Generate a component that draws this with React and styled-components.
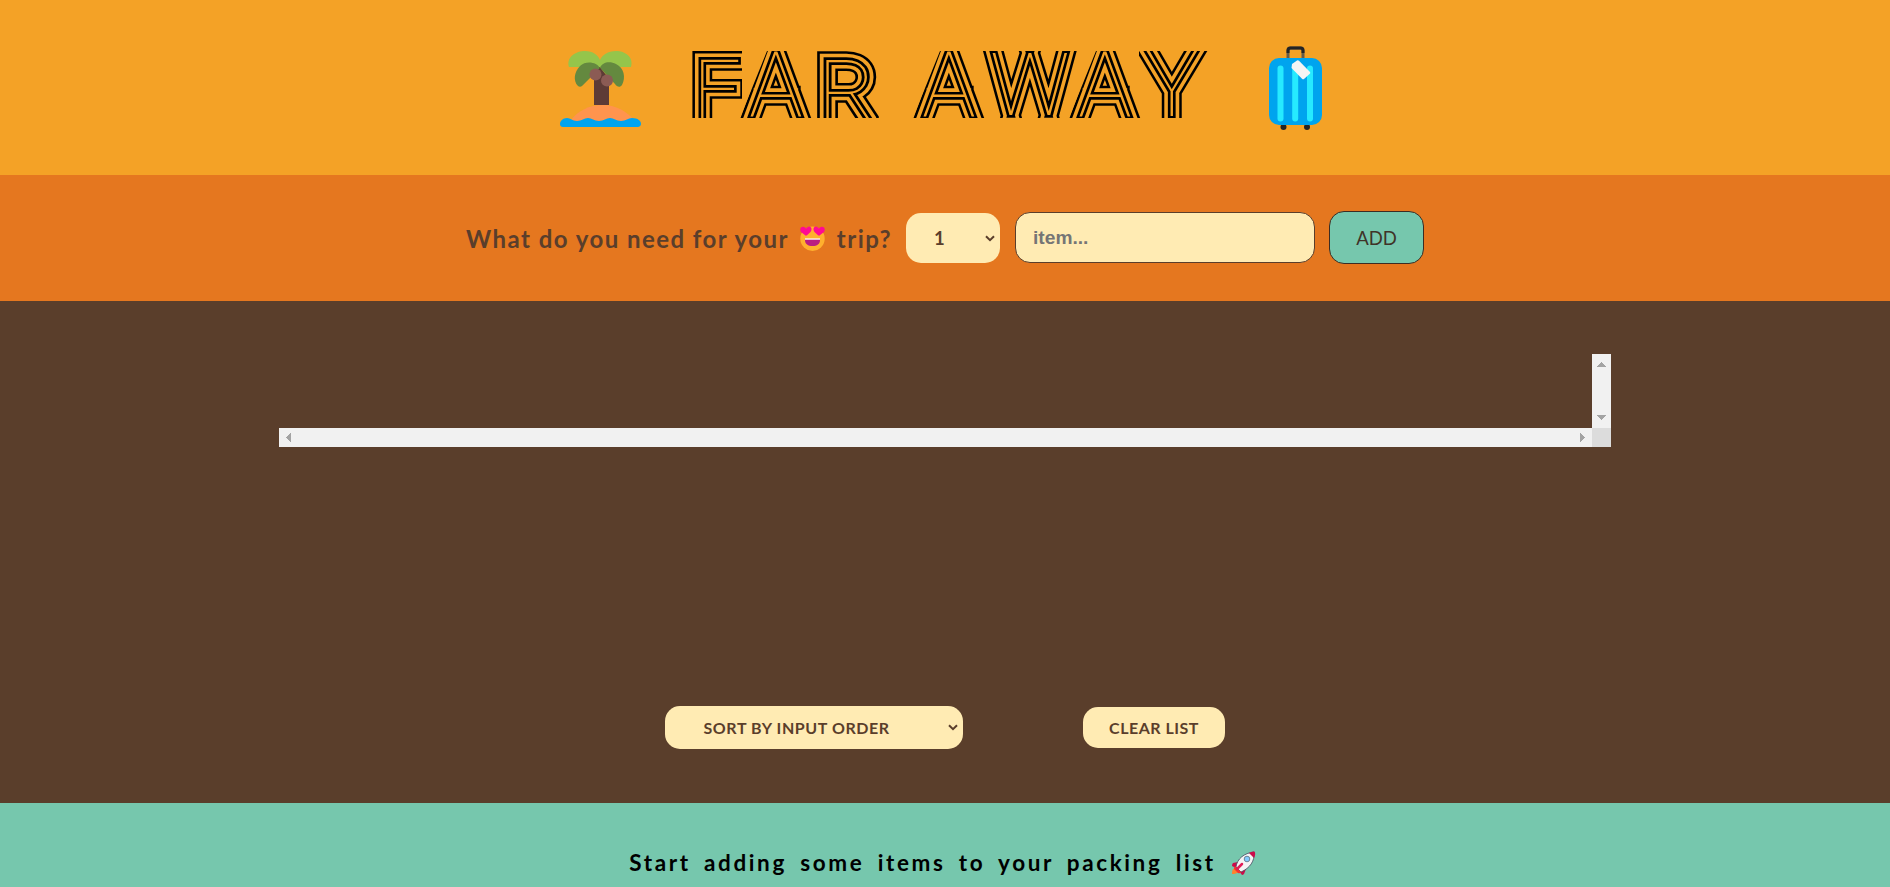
import React from "react";
import styled, { createGlobalStyle, css } from "styled-components";

const Global = createGlobalStyle`
  * { box-sizing: border-box; margin: 0; padding: 0; }
  body { background: #5a3e2b; overflow: hidden; }
`;

const cream = "#ffebb3";
const brown = "#5a3e2b";
const amber = "#f4a226";
const rounded = `Lato, "Open Sans", sans-serif`;

const Page = styled.div`
  height: 887px;
  display: grid;
  grid-template-rows: 175px 126px 502px 84px;
  font-family: ${rounded};
  color: ${brown};
  overflow: hidden;
`;

const Header = styled.header`
  background: ${amber};
  display: flex;
  justify-content: center;
  align-items: flex-start;
  padding: 46px 9px 0 0;
  svg { flex: none; display: block; }
`;

const Title = styled.h1`
  display: flex;
  width: 516px;
  height: 67px;
  margin: 5px 62px 0 50px;
  font: 100 84px/1 Roboto, sans-serif;
`;

const Word = styled.span`
  display: flex;
  & + & { margin-left: 33px; }
`;

const Letter = styled.span`
  flex: none;
  width: ${(p) => p.$w}px;
  height: 67px;
  margin-right: ${(p) => p.$gap || 0}px;
  clip-path: ${(p) => p.$clip || "inset(0 -4px)"};
`;

const layer = css`
  content: attr(data-char);
  position: absolute;
  left: 0;
  top: 0;
`;

const Glyph = styled.span`
  display: block;
  position: relative;
  width: max-content;
  line-height: 1;
  font-size: ${(p) => p.$size}px;
  margin: ${(p) => p.$y}px 0 0 ${(p) => p.$x}px;
  transform: scaleX(${(p) => p.$stretch || 1});
  transform-origin: left;
  color: #000;
  -webkit-text-stroke: 17.6px #000;
  &::before { ${layer} -webkit-text-stroke: 12.5px ${amber}; }
  &::after {
    ${layer}
    color: ${amber};
    -webkit-text-stroke: 5.4px #000;
    paint-order: stroke fill;
  }
`;

const Form = styled.form`
  background: #e5771f;
  display: flex;
  justify-content: center;
  align-items: center;
`;

const Question = styled.h3`
  display: flex;
  align-items: center;
  width: 440px;
  font-size: 24px;
  font-weight: 700;
  letter-spacing: 1.46px;
  white-space: pre;
  svg { margin: 0 12px 0 11px; flex: none; }
`;

const SelectBox = styled.div`
  display: flex;
  align-items: center;
  justify-content: space-between;
  width: ${(p) => p.$w}px;
  height: ${(p) => p.$h}px;
  padding: 0 5px 0 ${(p) => p.$pad}px;
  border-radius: 15px;
  background: ${cream};
  font-size: ${(p) => p.$size}px;
  font-weight: 700;
  letter-spacing: ${(p) => p.$ls || 0}px;
  white-space: nowrap;
`;

const ItemInput = styled.input`
  width: 300px;
  height: 51px;
  margin: 0 14px 1px 15px;
  padding: 0 17px;
  border: 1px solid ${brown};
  border-radius: 15px;
  background: ${cream};
  font: 700 19.2px "Liberation Sans", sans-serif;
  &::placeholder { color: #757575; opacity: 1; }
`;

const AddButton = styled.button`
  width: 95px;
  height: 53px;
  margin-bottom: 1px;
  border: 1px solid #3d2c22;
  border-radius: 15px;
  background: #76c7ad;
  color: #3f3328;
  font: 400 18.5px ${rounded};
`;

const ListArea = styled.main`
  background: ${brown};
  display: flex;
  flex-direction: column;
  align-items: center;
  justify-content: space-between;
  padding: 53px 0 54px;
`;

const ScrollPane = styled.div`
  display: grid;
  grid-template: 74px 19px / 1fr 19px;
  width: 1332px;
`;

const Track = styled.div`
  display: flex;
  flex-direction: ${(p) => (p.$vertical ? "column" : "row")};
  justify-content: space-between;
  align-items: center;
  grid-column: ${(p) => (p.$vertical ? 2 : 1)};
  background: #f1f1f1;
  padding: ${(p) => (p.$vertical ? "8px 0" : "0 7px")};
`;

const Corner = styled.div`
  background: #dcdcdc;
`;

const Actions = styled.div`
  display: flex;
  align-items: center;
  gap: 120px;
`;

const ClearButton = styled.button`
  width: 142px;
  height: 41px;
  border: 0;
  border-radius: 15px;
  background: ${cream};
  color: ${brown};
  font: 700 16px ${rounded};
  letter-spacing: 0.5px;
`;

const Footer = styled.footer`
  background: #76c7ad;
  color: #000;
  display: flex;
  justify-content: center;
  align-items: flex-start;
  padding: 46px 5px 0 0;
  font-size: 22.5px;
  line-height: 28px;
  font-weight: 700;
  letter-spacing: 2.6px;
  word-spacing: 5.3px;
  svg { margin: 2px 0 0 15px; }
`;

const Chevron = () => (
  <svg width="10" height="7" viewBox="0 0 10 7" fill="none">
    <path d="M1 1.2 5 5.2 9 1.2" stroke={brown} strokeWidth="2" />
  </svg>
);

const arrows = {
  up: "M0 5H9L5 0H4Z",
  down: "M0 0H9L5 5H4Z",
  left: "M5 0V9L0 5V4Z",
  right: "M0 0V9L5 5V4Z",
};

const Arrow = ({ dir }) => {
  const tall = dir === "left" || dir === "right";
  return (
    <svg width={tall ? 5 : 9} height={tall ? 9 : 5} shapeRendering="crispEdges">
      <path d={arrows[dir]} fill="#a3a3a3" />
    </svg>
  );
};

const Palm = () => (
  <svg width="82" height="84" viewBox="0 0 82 84">
    <path d="M12 74C19 65 30 59 44 59s24 7 31 15v3H12Z" fill="#ff944e" />
    <path d="M35 28 40 20l10 13v26H35Z" fill="#5d3b36" />
    <path d="M10 21C7 11 17 5 26 5c8 0 13 4 15 9 2-5 8-9 16-9 9 0 18 6 15 16H41Z" fill="#95c54b" />
    <path d="M41 22C38 16 27 14 21 20c-6 6-7 15-2 20 1 1 3 1 4 0l11-11 7-7 15 16c2 3 5 4 7 1 4-8 2-17-6-21-6-3-14-2-16 4Z" fill="#64893f" />
    <path d="M36 27 41 22l9 11v8H36Z" fill="#5d3b36" />
    <circle cx="36.5" cy="28.5" r="6" fill="#8b5b54" />
    <circle cx="48" cy="34.5" r="6" fill="#8b5b54" />
    <path d="M1 78c0-3 3-6 7-6s5 3 10 3 7-3 11-3 6 3 11 3 7-3 11-3 6 3 11 3 7-3 11-3c6 0 9 3 9 6 0 2-2 3-3 3H4c-2 0-3-1-3-3Z" fill="#00a4ee" />
  </svg>
);

const Suitcase = () => (
  <svg width="53" height="84" viewBox="0 0 53 84">
    <path d="M19 13V4.5Q19 2 21.5 2h10Q34 2 34 4.5V13" fill="none" stroke="#655b48" strokeWidth="3" />
    <path d="M19 7V4.5Q19 2 21.5 2h10Q34 2 34 4.5V7" fill="none" stroke="#242424" strokeWidth="3" />
    <circle cx="14.5" cy="81" r="3" fill="#242424" />
    <circle cx="38" cy="81" r="3" fill="#242424" />
    <rect y="12" width="53" height="67" rx="10" fill="#00a4ee" />
    <g fill="#26eaff">
      <rect x="8.5" y="19.5" width="6" height="56" rx="3" />
      <rect x="23.2" y="19.5" width="6" height="56" rx="3" />
      <rect x="38" y="19.5" width="6" height="56" rx="3" />
    </g>
    <path d="M23 18 28 14.5q1-.5 2 .3l11 11.2q.6 1-.2 1.8L35 33q-1 .6-2-.3L22.5 22Z" fill="#f4f4f4" />
  </svg>
);

const HeartEyes = () => (
  <svg width="25" height="25" viewBox="0 0 25 25">
    <circle cx="12.5" cy="12.7" r="12.2" fill="#ffb02e" />
    <path d="M5 13H20V14C20 18 17 20 12.5 20S5 18 5 14Z" fill="#bb1d80" />
    <path d="M5 12.3H20V13.8H5Z" fill="#fff" opacity=".85" />
    <path d="M5.5 9.5 1 6C-1 3 1 .2 4 1q1.3.4 2 1.5C7.5.5 10-.3 11 1.5c1 1.500.4 3-.5 4.500L7 9.300Q6 10 5.500 9.500Z" fill="#ff0a93" />
    <path d="M19.500 9.500 24 6c2-3 0-5.800-3-5q-1.300.4-2 1.500C17.500.5 15-.3 14 1.500c-1 1.500-.4 3 .5 4.500L18 9.300q1 .7 1.500.2Z" fill="#ff0a93" />
  </svg>
);

const Rocket = () => (
  <svg width="25" height="24" viewBox="0 0 25 24">
    <path d="M1 23c0-4 1-6 4-6s4 3 2 4.500-4 1.500-6 1.500Z" fill="#ff822d" />
    <path d="M7 11 2 12q-1 1-1 3l4 2Zm8 7-2 5q-1 1-2 1l-3-4Z" fill="#ca0b4a" />
    <path d="M5 16C6 8 13 2 23 1c1 9-4 16-13 20Z" fill="#f4f4f4" stroke="#45475f" strokeWidth=".8" />
    <path d="M18 2Q21 0 23.500.5 25 3 23 7Z" fill="#ca0b4a" />
    <path d="M4 15 10 21q-1 2-3 1l-4-4q0-2 1-3Z" fill="#f8312f" />
    <path d="m6 18 5-5" stroke="#e11d57" strokeWidth="2.500" strokeLinecap="round" />
    <circle cx="16" cy="8" r="2.800" fill="#83cbff" stroke="#6b8496" />
  </svg>
);

const slanted = "polygon(25px 0, 50px 0, 77px 67px, -2px 67px)";

const words = [
  [
    { c: "F", w: 51, x: 2, y: -2, size: 84, clip: "inset(0)" },
    { c: "A", w: 75, x: 7, y: -10, size: 90, gap: -1, clip: slanted },
    { c: "R", w: 66, x: 2, y: -2, size: 84, stretch: 1.05 },
  ],
  [
    { c: "A", w: 75, x: 7, y: -10, size: 90, gap: -6, clip: slanted },
    { c: "W", w: 93, x: 6, y: -10, size: 88, gap: -6 },
    { c: "A", w: 75, x: 7, y: -10, size: 90, gap: -3, clip: slanted },
    { c: "Y", w: 63, x: 2, y: -10, size: 90 },
  ],
];

export default function App() {
  return (
    <>
      <Global />
      <Page>
        <Header>
          <Palm />
          <Title>
            {words.map((letters, i) => (
              <Word key={i}>
                {letters.map((l, j) => (
                  <Letter key={j} $w={l.w} $gap={l.gap} $clip={l.clip}>
                    <Glyph data-char={l.c} $x={l.x} $y={l.y} $size={l.size} $stretch={l.stretch}>{l.c}</Glyph>
                  </Letter>
                ))}
              </Word>
            ))}
          </Title>
          <Suitcase />
        </Header>
        <Form>
          <Question>What do you need for your<HeartEyes />trip?</Question>
          <SelectBox $w={94} $h={50} $pad={28} $size={18.5}>1<Chevron /></SelectBox>
          <ItemInput placeholder="item..." />
          <AddButton type="button">ADD</AddButton>
        </Form>
        <ListArea>
          <ScrollPane>
            <Track $vertical><Arrow dir="up" /><Arrow dir="down" /></Track>
            <Track><Arrow dir="left" /><Arrow dir="right" /></Track>
            <Corner />
          </ScrollPane>
          <Actions>
            <SelectBox $w={298} $h={43} $pad={38.5} $size={16} $ls={0.58}>SORT BY INPUT ORDER<Chevron /></SelectBox>
            <ClearButton>CLEAR LIST</ClearButton>
          </Actions>
        </ListArea>
        <Footer>Start adding some items to your packing list<Rocket /></Footer>
      </Page>
    </>
  );
}
